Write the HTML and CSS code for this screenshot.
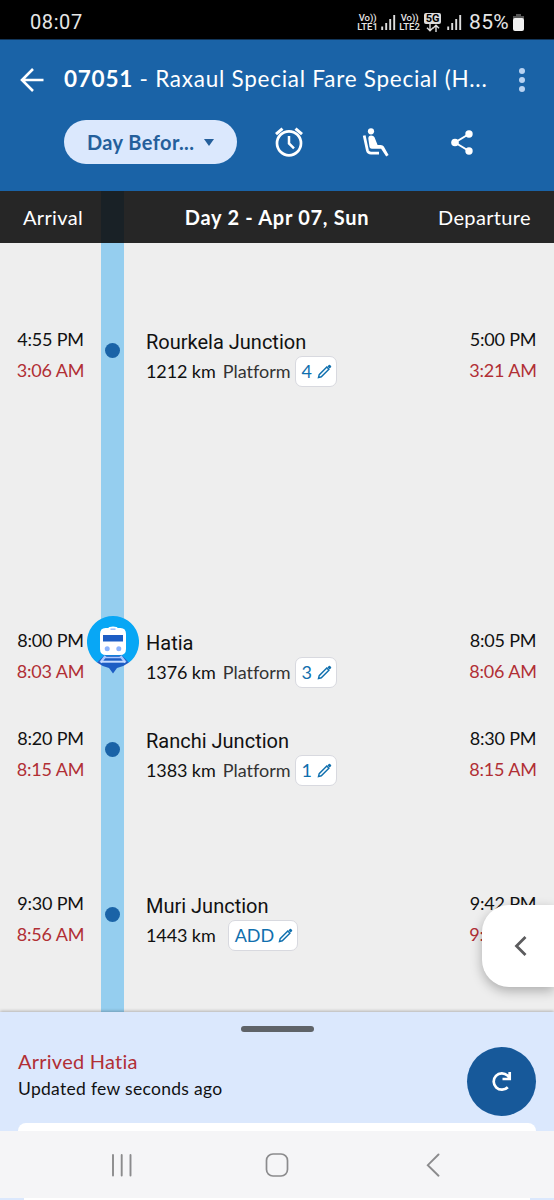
FILE: index.html
```html
<!DOCTYPE html>
<html lang="en">
<head>
    <meta charset="UTF-8">
    <meta name="viewport" content="width=device-width, initial-scale=1.0">
    <title>Train Status</title>
    <link rel="stylesheet" href="styles.css">
</head>
<body>
    <!-- Shared icons -->
    <svg class="sprite">
        <symbol id="pencil" viewBox="0 0 15 15">
            <path d="M1.5 13.5l.7-2.8 7.600-7.600 2.100 2.100-7.600 7.600z" fill="none" stroke="currentColor" stroke-width="1.400"/>
            <path d="M10.400 2.400l1.400-1.400q.7-.6 1.300 0l.9.9q.6.6 0 1.300l-1.400 1.400z" fill="currentColor"/>
        </symbol>
        <symbol id="signal" viewBox="0 0 15 16">
            <path d="M1.2 12.5V16M5.2 9V16M9.2 5V16M13.2 1V16" stroke="#ddd" stroke-width="1.9"/>
        </symbol>
    </svg>

    <div class="status-bar">
        <span class="clock">08:07</span>
        <div class="status-icons">
            <span class="volte">Vo))<br>LTE1</span>
            <svg class="signal"><use href="#signal"/></svg>
            <span class="volte second">Vo))<br>LTE2</span>
            <span class="network"><b>5G</b>
                <svg width="14" height="8" viewBox="0 0 14 8" fill="none" stroke="#ddd" stroke-width="1.4"><path d="M4 0v6.5M1 3.7l3 3 3-3M10 8V1.3M7 4.2l3-3 3 3"/></svg>
            </span>
            <svg class="signal last"><use href="#signal"/></svg>
            <span class="percent">85%</span>
            <svg class="battery" viewBox="0 0 11 17"><path d="M3 0h5v2h3v3H0V2h3z" fill="#555"/><rect y="4" width="11" height="13" rx="2" fill="#f2f2f2"/></svg>
        </div>
    </div>

    <header>
        <div class="title-row">
            <svg class="back" viewBox="0 0 24 24" fill="none" stroke="#fff" stroke-width="2.6"><path d="M23.5 12H2M13 1L2 12l11 11"/></svg>
            <h1><b>07051</b> - Raxaul Special Fare Special (H...</h1>
            <svg class="more" viewBox="0 0 6 24" fill="#b9d3f2"><circle cx="3" cy="3" r="3"/><circle cx="3" cy="12" r="3"/><circle cx="3" cy="21" r="3"/></svg>
        </div>
        <div class="action-row">
            <button class="day-button"><span>Day Befor...</span><i></i></button>
            <svg class="alarm" viewBox="0 0 28 30" fill="none" stroke="#fff">
                <circle cx="14" cy="16.3" r="12" stroke-width="2.7"/>
                <path d="M14 9v7.5l5 4.8" stroke-width="2.5"/>
                <path d="M1 7.2l6.5-5.6M27 7.2l-6.5-5.6" stroke-width="3"/>
            </svg>
            <svg class="seat" viewBox="0 0 27 29" fill="none" stroke="#fff">
                <circle cx="9" cy="3.3" r="3.1" fill="#fff" stroke="none"/>
                <path d="M2.2 7.5l3.2 14.8q.8 2.8 3.6 2.8h8" stroke-width="2.8"/>
                <path d="M6.3 10.5q0-2.9 2.9-2.9 2.4 0 3.3 1.7l3.1 7.6h3.1q2.3 0 3.1 1.6l4.8 8.6-2.4 1.3-5.1-7.600h-9.300q-1.900 0-2.300-1.700z" fill="#fff" stroke="none"/>
            </svg>
            <svg class="share" viewBox="0 0 22 25" fill="#fff">
                <path d="M18 4L4 12.5 18 21" fill="none" stroke="#fff" stroke-width="2"/>
                <circle cx="18" cy="4" r="3.7"/><circle cx="4" cy="12.5" r="3.8"/><circle cx="18" cy="21" r="3.7"/>
            </svg>
        </div>
    </header>

    <main class="timeline">
        <div class="day-head">
            <span>Arrival</span>
            <b>Day 2 - Apr 07, Sun</b>
            <span>Departure</span>
        </div>

        <div class="stops">
            <div class="stop gap-long">
                <div class="times"><p>4:55 PM</p><p class="late">3:06 AM</p></div>
                <div class="marker"><i class="dot"></i></div>
                <div class="station">
                    <h2>Rourkela Junction</h2>
                    <p><span class="km">1212 km</span><span class="platform">Platform</span><button class="chip">4<svg><use href="#pencil"/></svg></button></p>
                </div>
                <div class="times"><p>5:00 PM</p><p class="late">3:21 AM</p></div>
            </div>

            <div class="stop gap-short">
                <div class="times"><p>8:00 PM</p><p class="late">8:03 AM</p></div>
                <div class="marker">
                    <svg class="train" viewBox="0 0 52 58">
                        <path d="M26 0a26 26 0 0 1 16 46.500L34 40H18l-8 6.500A26 26 0 0 1 26 0z" fill="#08a7f5"/>
                        <path d="M17 39.500L10 46.500q6 4.500 12 5.500l4 5.500 4-5.500q6-1 12-5.500l-7-7z" fill="#1d5dc4"/>
                        <path d="M18.500 40L13.500 46.500M33.500 40L38.500 46.500" stroke="#a9c8ff" stroke-width="2.400"/>
                        <path d="M18 41.500h16" stroke="#a9c8ff" stroke-width="1.500"/>
                        <path d="M14 45.700h24" stroke="#c7dcff" stroke-width="2"/>
                        <path d="M21.500 12q0-1.500 4.500-1.500t4.500 1.500h3q5.500 0 5.500 6v15q0 6-6 6H19q-6 0-6-6V18q0-6 5.500-6z" fill="#fff"/>
                        <path d="M23.500 13.200h5" stroke="#9fc1ff" stroke-width="1.600"/>
                        <path d="M16 19h20v6.500H16z" fill="#1d5dc4"/>
                        <circle cx="20.200" cy="32.800" r="2.500" fill="#8cb4ff"/><circle cx="31.800" cy="32.800" r="2.500" fill="#8cb4ff"/>
                    </svg>
                </div>
                <div class="station">
                    <h2>Hatia</h2>
                    <p><span class="km">1376 km</span><span class="platform">Platform</span><button class="chip">3<svg><use href="#pencil"/></svg></button></p>
                </div>
                <div class="times"><p>8:05 PM</p><p class="late">8:06 AM</p></div>
            </div>

            <div class="stop gap-medium">
                <div class="times"><p>8:20 PM</p><p class="late">8:15 AM</p></div>
                <div class="marker"><i class="dot"></i></div>
                <div class="station">
                    <h2>Ranchi Junction</h2>
                    <p><span class="km">1383 km</span><span class="platform">Platform</span><button class="chip">1<svg><use href="#pencil"/></svg></button></p>
                </div>
                <div class="times"><p>8:30 PM</p><p class="late">8:15 AM</p></div>
            </div>

            <div class="stop">
                <div class="times"><p>9:30 PM</p><p class="late">8:56 AM</p></div>
                <div class="marker"><i class="dot"></i></div>
                <div class="station">
                    <h2>Muri Junction</h2>
                    <p><span class="km">1443 km</span><button class="chip add">ADD<svg><use href="#pencil"/></svg></button></p>
                </div>
                <div class="times"><p>9:42 PM</p><p class="late">9:10 AM</p></div>
            </div>
        </div>

        <button class="side-tab">
            <svg width="14" height="20" viewBox="0 0 14 20" fill="none" stroke="#5c5c5e" stroke-width="2.8"><path d="M11.500 1L2.500 10l9 9"/></svg>
        </button>
    </main>

    <section class="sheet">
        <div class="handle"></div>
        <div class="sheet-row">
            <div>
                <p class="arrived">Arrived Hatia</p>
                <p class="updated">Updated few seconds ago</p>
            </div>
            <button class="refresh">
                <svg width="21" height="21" viewBox="0 0 21 21" fill="none" stroke="#fff" stroke-width="2.700"><path d="M16.800 16.200A8.200 8.200 0 1 1 16.500 4.500L19 7.500M18.700 1V8H11.500"/></svg>
            </button>
        </div>
        <div class="card"></div>
    </section>

    <nav>
        <svg width="22" height="24" viewBox="0 0 22 24" stroke="#8b8b8d" stroke-width="1.900" stroke-linecap="round"><path d="M2 2v20.500M10.700 2v20.500M19.500 2v20.500"/></svg>
        <svg class="home" width="24" height="24" viewBox="0 0 24 24" fill="none" stroke="#8b8b8d" stroke-width="1.700"><rect x="1.500" y="1" width="21" height="22" rx="6.500"/></svg>
        <svg width="14" height="24" viewBox="0 0 14 24" fill="none" stroke="#8b8b8d" stroke-width="1.900" stroke-linecap="round"><path d="M12.500 1.500L1.800 12.200l10.700 10.500"/></svg>
    </nav>
    <div class="peek"></div>
</body>
</html>
```
FILE: styles.css
```css
* {
    box-sizing: border-box;
}

body {
    margin: 0;
    width: 554px;
    height: 1200px;
    overflow: hidden;
    font-family: Lato, "Open Sans", sans-serif;
    font-size: 18px;
    color: #111;
    background: #dbe8fd;
}

h1, h2, p {
    margin: 0;
    font-weight: normal;
}

button {
    border: none;
    padding: 0;
    font-family: inherit;
}

svg {
    display: block;
    flex: none;
}

.sprite {
    display: none;
}

/* Status bar */
.status-bar {
    display: flex;
    justify-content: space-between;
    height: 40px;
    padding: 5px 30px 0;
    background: #000;
    color: #e6e6e6;
    border-bottom: 1px solid #12365a;
    font-family: Roboto, sans-serif;
    align-items: center;
}

.clock {
    font-size: 20px;
    letter-spacing: 0.6px;
}

.status-icons {
    display: flex;
    align-items: center;
}

.volte {
    width: 21px;
    font-size: 9.5px;
    font-weight: 500;
    line-height: 9px;
    text-align: center;
    white-space: nowrap;
}

.volte.second {
    margin-left: 3px;
}

.signal {
    width: 15px;
    height: 16px;
    margin-left: 3px;
}

.signal.last {
    margin-left: 6px;
}

.network {
    display: flex;
    flex-direction: column;
    align-items: center;
    width: 17px;
    margin-left: 4px;
}

.network b {
    width: 17px;
    border-radius: 2px;
    background: #ddd;
    color: #000;
    font-size: 11px;
    line-height: 11px;
    text-align: center;
}

.percent {
    margin-left: 7px;
    font-size: 21px;
    letter-spacing: 0.3px;
}

.battery {
    width: 11px;
    height: 17px;
    margin-left: 4px;
}

/* Header */
header {
    height: 151px;
    background: #1a63a7;
    color: #fff;
}

.title-row {
    display: flex;
    align-items: center;
    height: 80px;
    padding: 0 29px 0 20px;
}

.back {
    width: 24px;
    height: 24px;
}

h1 {
    flex: 1;
    margin: -3px 0 0 20px;
    font-size: 22.5px;
    letter-spacing: 0.75px;
    white-space: nowrap;
}

.more {
    width: 6px;
    height: 24px;
}

.action-row {
    display: flex;
    align-items: center;
    height: 44px;
    padding-left: 64px;
}

.day-button {
    display: flex;
    align-items: center;
    justify-content: space-between;
    width: 173px;
    height: 44px;
    padding: 0 23px;
    border-radius: 22px;
    background: #dbe8fd;
    color: #245f9b;
    font-size: 20px;
    font-weight: bold;
    letter-spacing: 0.4px;
}

.day-button i {
    border: 5.5px solid transparent;
    border-top: 7px solid #245f9b;
    border-bottom: none;
}

.alarm {
    width: 28px;
    height: 30px;
    margin-left: 38px;
}

.seat {
    width: 27px;
    height: 29px;
    margin-left: 59px;
}

.share {
    width: 22px;
    height: 25px;
    margin-left: 62px;
}

/* Timeline */
.timeline {
    position: relative;
    height: 821px;
    background: linear-gradient(90deg, transparent 101px, #95ceef 101px, #95ceef 124px, transparent 124px) #eee;
}

.day-head {
    display: flex;
    align-items: center;
    justify-content: space-between;
    height: 52px;
    padding: 0 23px;
    background: rgba(5, 5, 5, 0.86);
    color: #fff;
    font-size: 20px;
    letter-spacing: 0.35px;
}

.day-head b {
    margin-left: 33px;
    letter-spacing: 0.7px;
}

.stops {
    padding-top: 82px;
}

.stop {
    display: grid;
    grid-template-columns: 101px 23px 1fr 102px;
}

.gap-long {
    height: 301px;
}

.gap-short {
    height: 98px;
}

.gap-medium {
    height: 165px;
}

.times {
    margin-top: -1px;
    line-height: 31px;
    letter-spacing: -0.2px;
    text-align: center;
}

.late {
    color: #b12f35;
}

.marker {
    position: relative;
}

.dot {
    display: block;
    width: 15px;
    height: 15px;
    margin: 17.5px auto 0;
    border-radius: 50%;
    background: #1a63a7;
}

.train {
    position: absolute;
    top: -10px;
    left: -14px;
    width: 52px;
    height: 58px;
}

.station {
    padding-left: 22px;
    line-height: 31px;
}

.station h2 {
    font-family: Roboto, sans-serif;
    font-size: 20px;
    line-height: 34px;
    height: 31px;
}

.station p {
    display: flex;
    align-items: center;
}

.km {
    letter-spacing: -0.1px;
}

.platform {
    margin-left: 7px;
    color: #333;
    font-variant-ligatures: none;
}

.chip {
    display: flex;
    align-items: center;
    justify-content: space-between;
    width: 42px;
    height: 31px;
    margin-left: 4px;
    padding: 0 4px 2px 6px;
    border: 1px solid #d8d9df;
    border-radius: 7px;
    background: #fff;
    color: #0f6fae;
    font-size: 18px;
}

.chip svg {
    width: 15px;
    height: 15px;
    margin-top: 1px;
}

.chip.add {
    width: 70px;
    margin-left: 12px;
}

.side-tab {
    position: absolute;
    right: 0;
    bottom: 25px;
    display: flex;
    align-items: center;
    width: 72px;
    height: 82px;
    padding-left: 32px;
    border-radius: 27px 0 0 27px;
    background: #fff;
    box-shadow: 0 4px 12px rgba(0, 0, 0, 0.28);
}

/* Bottom sheet */
.sheet {
    position: relative;
    height: 119px;
    padding: 14px 18px 0;
    background: #dbe8fd;
    box-shadow: 0 -1px 3px rgba(0, 0, 0, 0.25);
}

.handle {
    width: 73px;
    height: 6px;
    margin: 0 auto;
    border-radius: 3px;
    background: #5f6368;
}

.sheet-row {
    display: flex;
    justify-content: space-between;
    height: 91px;
    padding-top: 15px;
}

.arrived {
    margin-top: 1px;
    color: #b12f35;
    font-size: 20px;
    line-height: 27px;
    letter-spacing: 0.25px;
    font-variant-ligatures: none;
}

.updated {
    font-size: 17.5px;
    line-height: 27px;
    letter-spacing: 0.3px;
}

.refresh {
    display: flex;
    align-items: center;
    justify-content: center;
    width: 69px;
    height: 69px;
    border-radius: 50%;
    background: #17599a;
}

.card {
    height: 8px;
    border-radius: 12px 12px 0 0;
    background: #fff;
}

/* System navigation */
nav {
    display: flex;
    align-items: center;
    justify-content: space-between;
    position: relative;
    height: 67px;
    padding: 0 114px 0 111px;
    background: #f5f5f7;
}

.home {
    margin-right: 6px;
}

.peek {
    height: 2px;
    margin: 0 24px;
    background: #fff;
}
```
